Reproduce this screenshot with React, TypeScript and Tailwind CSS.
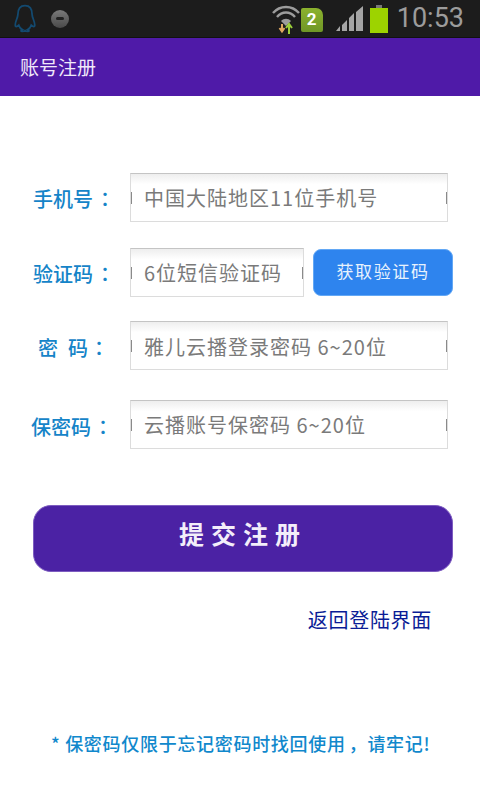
import React from 'react';

const cjk = 'font-["Noto_Sans_CJK_SC","Roboto",sans-serif]';

const Field = ({ text, w = 'w-[318px]', cls = '' }: { text: string; w?: string; cls?: string }) => (
  <div className={`${w} ${cls} h-[49px] shrink-0 flex items-center pl-[13px] bg-gradient-to-b from-[#eeeeee] to-white to-[22%] border border-[#dcdcdc] border-t-[#c4c4c4] relative text-[20px] leading-none text-[#7a7a7a] tracking-[1px] whitespace-nowrap`}>
    <span className="absolute left-0 top-[18px] w-px h-[12px] bg-[#8a8a8a]" />
    <span className="absolute right-0 top-[18px] w-px h-[12px] bg-[#8a8a8a]" />
    {text}
  </div>
);

const Colon = ({ cls = 'ml-[2px]' }: { cls?: string }) => (
  <span className={`${cls} font-["Noto_Sans_CJK_TC",sans-serif]`}>：</span>
);

const Label = ({ children, cls }: { children: React.ReactNode; cls: string }) => (
  <div className={`${cls} w-[130px] shrink-0 text-[20px] leading-none font-medium text-[#1584c8] whitespace-nowrap flex`}>
    {children}
  </div>
);

const StatusBar = () => (
  <div className="h-[38px] bg-[#1c1c1c] flex items-center border-b border-[#111] relative">
    <svg width="28" height="32" viewBox="0 0 30 36" className="ml-[11px]" fill="none" stroke="#134a70" strokeWidth="2">
      <path d="M15 3c-6 0-8 5-8 10 0 4-3 7-3 12 0 2 2 2 4 0 1 3 2 4 4 5-2 1-2 2 0 2 2 0 3-1 3-1s1 1 3 1c2 0 2-1 0-2 2-1 3-2 4-5 2 2 4 2 4 0 0-5-3-8-3-12 0-5-2-10-8-10z" />
    </svg>
    <div className="ml-[12px] w-[18px] h-[18px] rounded-full bg-gradient-to-b from-[#7a7a7a] to-[#4a4a4a] flex items-center justify-center">
      <div className="w-[8px] h-[3px] bg-[#222] rounded-sm" />
    </div>
    <div className="ml-auto flex items-center pr-[16px]">
      <svg width="30" height="34" viewBox="0 0 30 34" fill="none">
        <path d="M2 11C9 3 21 3 28 11" stroke="#9c9c9c" strokeWidth="2.400" />
        <path d="M6 15c5-6 13-6 18 0" stroke="#9c9c9c" strokeWidth="2.400" />
        <path d="M10 19c3-3 7-3 10 0l-5 5z" fill="#9c9c9c" />
        <path d="M11 22v7M8.500 26l2.500 3.500 2.500-3.500" stroke="#e0a860" strokeWidth="2" />
        <path d="M18 32v-9M15 26l3-4 3 4" stroke="#9ccf3a" strokeWidth="2" />
      </svg>
      <div className="w-[22px] h-[24px] mt-[2px] bg-gradient-to-b from-[#8cb22e] to-[#6f9626] rounded-tr-[7px] rounded-[2px] flex items-center justify-center text-white text-[17px] font-bold font-['Roboto',sans-serif] leading-none">
        2
      </div>
      <svg width="28" height="26" viewBox="0 0 28 26" className="ml-[13px] mt-[1px]" fill="#a5a5a5">
        <path d="M0 25h4v-5zM6 25h5V14l-5 5zM13 25h5V7l-5 5zM20 25h7V0l-7 6z" />
      </svg>
      <svg width="20" height="28" viewBox="0 0 20 28" className="ml-[5px]">
        <rect x="7" y="0" width="6" height="3" fill="#777" />
        <rect x="1" y="3" width="18" height="25" fill="#9dd300" />
      </svg>
      <div className="ml-[8px] text-[27px] leading-none text-[#9c9c9c] font-['Roboto',sans-serif]">10:53</div>
    </div>
  </div>
);

export default function App() {
  return (
    <div className={`w-[480px] h-[800px] bg-white overflow-hidden flex flex-col ${cjk}`}>
      <StatusBar />
      <div className="h-[58px] bg-[#4f1aa8] flex items-center pl-[20px] text-[19px] text-[#f0e8fa]">账号注册</div>

      <div className="mt-[77px] flex items-center">
        <Label cls="pl-[33px] pt-[2px]">手机号<Colon /></Label>
        <Field text="中国大陆地区11位手机号" />
      </div>
      <div className="mt-[26px] flex items-center">
        <Label cls="pl-[33px] pt-[2px]">验证码<Colon /></Label>
        <Field text="6位短信验证码" w="w-[174px]" />
        <button className="ml-[9px] w-[140px] h-[47px] pb-[3px] rounded-[8px] bg-[#2e84ee] border border-[#63a8f5] text-[17px] text-[#e8f2fd] tracking-[1.6px]">
          获取验证码
        </button>
      </div>
      <div className="mt-[24px] flex items-center">
        <Label cls="pl-[38px] pt-[4px]">
          <span>密</span>
          <span className="ml-[10px]">码</span>
          <Colon cls="ml-[1px]" />
        </Label>
        <Field text="雅儿云播登录密码 6~20位" cls="pt-[2px]" />
      </div>
      <div className="mt-[30px] flex items-center">
        <Label cls="pl-[31px] pt-[4px]">保密码<Colon /></Label>
        <Field text="云播账号保密码 6~20位" />
      </div>

      <button className="mt-[56px] ml-[33px] w-[420px] h-[67px] pb-[9px] rounded-[18px] bg-[#4b22a4] border border-[#7d5cc0] text-[25px] font-bold text-[#f3eefa] tracking-[7px]">
        提交注册
      </button>

      <div className="mt-[38px] pr-[48px] text-right text-[20px] leading-none text-[#0a1c96] tracking-[0.7px]">返回登陆界面</div>

      <div className="mt-[104px] pl-[51px] text-[18px] leading-none font-medium text-[#1088cc] tracking-[0.7px] whitespace-nowrap">
        * 保密码仅限于忘记密码时找回使用<span className="ml-[3px]">，</span>请牢记!
      </div>
    </div>
  );
}
